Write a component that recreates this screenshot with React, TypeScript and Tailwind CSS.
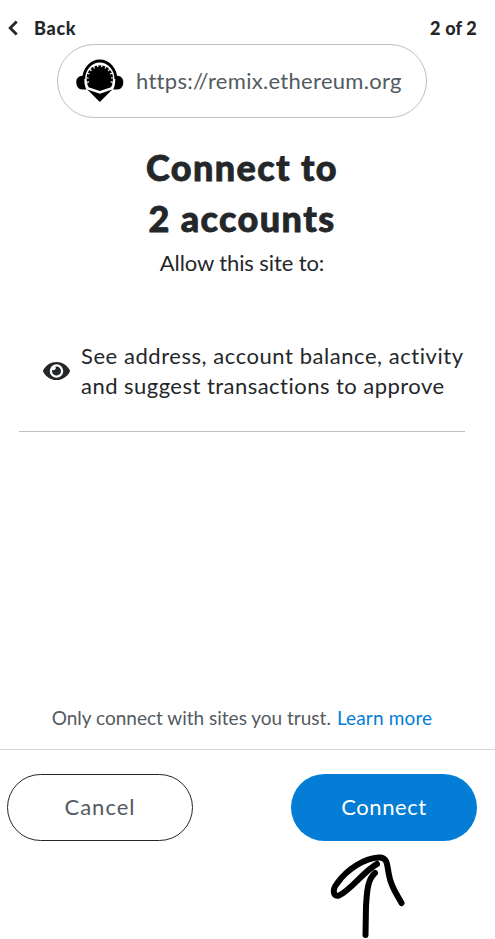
import React from 'react';
import { FaEye } from 'react-icons/fa';

function RemixLogo() {
  return (
    <svg viewBox="0 0 60 60" className="h-[60px] w-[60px]" aria-hidden="true">
      <path d="M13.800 28a16 18 0 0 1 32 0" fill="none" stroke="#000" strokeWidth="2.800" />
      <path d="M14.500 24.700c-5-.2-8.200 1.700-8.200 6.300 0 4.500 2 7.300 6.200 7.600h4c-1.800-3.300-2.600-8-2-13.900zM45.100 24.700c5-.2 8.200 1.700 8.200 6.300 0 4.500-2 7.300-6.200 7.600h-4c1.800-3.300 2.600-8 2-13.900z" fill="#000" />
      <path d="M16.600 27a13.200 12.800 0 0 1 26.400 0c0 3.500-.6 6.500-2 9.300L29.800 40 18.600 36.300c-1.400-2.800-2-5.800-2-9.300z" fill="#000" />
      <path d="M27.500 13.500l.4 2.700M32.100 13.500l-.4 2.700M36.300 15l-1.200 2.400M40 18l-1.900 1.900M42.500 22l-2.500 1M43.600 27h-2.700M43.200 31.500l-2.600-.6M23.300 15l1.200 2.400M19.600 18l1.900 1.900M17.100 22l2.500 1M16 27h2.700M16.400 31.500l2.600-.6" stroke="#fff" strokeWidth="1.200" />
      <path d="M17.300 38.600l12.500 4.200 12.500-4.200-12.500 12.500z" fill="#000" />
    </svg>
  );
}

function HandDrawnArrow() {
  return (
    <svg viewBox="0 0 100 94" className="ml-[320px] mt-1 h-[94px] w-[100px]" fill="none" stroke="#000" strokeWidth="6" strokeLinecap="round" strokeLinejoin="round" aria-hidden="true">
      <path d="M57 19C45 25 30 46 19 50.500C13 52 12 45 17 38.500C27 24 45 13 59 12.500C68 12 67 21 69 30C71 42 76 48 81.500 58" />
      <path d="M55 28C47 35 47 48 46 61L45.500 90" />
    </svg>
  );
}

export default function App() {
  return (
    <main className="flex h-[939px] w-[495px] flex-col overflow-hidden bg-white font-['Lato',sans-serif] text-[#24272a]">
      <header className="flex h-11 shrink-0 items-center justify-between pl-2 pr-[18px] pt-3 text-[18px] font-black leading-8">
        <div className="flex items-center">
          <svg viewBox="0 0 10 16" className="h-4 w-2.5" fill="none" stroke="currentColor" strokeWidth="2.800" aria-hidden="true">
            <path d="M8.700 1.500L2.200 8l6.500 6.500" />
          </svg>
          <span className="ml-4 tracking-[0.7px]">Back</span>
        </div>
        <span className="tracking-[0.2px]">2 of 2</span>
      </header>

      <section className="flex w-[484px] flex-col items-center">
        <div className="flex h-[74px] w-[370px] items-center rounded-full border border-[#bbc0c5] pl-3 text-[22px] text-[#535a61]">
          <RemixLogo />
          <span className="ml-1.5 whitespace-nowrap pb-px tracking-[0.3px]">https://remix.ethereum.org</span>
        </div>
        <h1 className="mt-6 text-center text-[36px] font-black leading-[51px] tracking-[1.4px] [-webkit-text-stroke:0.8px_currentColor]">
          <span className="block">Connect to</span>
          <span className="block">2 accounts</span>
        </h1>
        <p className="mt-[3px] text-[22px] leading-[32px] tracking-[-0.1px]">Allow this site to:</p>
      </section>

      <section className="ml-[19px] mt-[62px] flex h-[91px] w-[446px] border-b border-[#bbc0c5] pl-6">
        <FaEye className="mt-[18px] h-6 w-[27px] shrink-0" />
        <p className="ml-[11px] whitespace-nowrap text-[22px] leading-[30px]">
          <span className="block tracking-[0.55px]">See address, account balance, activity</span>
          <span className="block tracking-[0.47px]">and suggest transactions to approve</span>
        </p>
      </section>

      <p className="mt-auto flex w-[484px] justify-center whitespace-nowrap pb-[17px] text-[19px] leading-7 text-[#535a61]">
        <span>Only connect with sites you trust.</span>
        <a className="ml-1.5 tracking-[0.15px] text-[#037dd6]">Learn more</a>
      </p>
      <footer className="h-[190px] shrink-0 border-t border-[#d6d9dc] pt-6">
        <div className="flex justify-between pl-[7px] pr-[18px] text-[22px]">
          <button className="h-[67px] w-[186px] rounded-full border border-[#24272a] pb-0.5 tracking-[1px] text-[#535a61]">Cancel</button>
          <button className="h-[67px] w-[186px] rounded-full bg-[#037dd6] pb-0.5 tracking-[0.6px] text-white">Connect</button>
        </div>
        <HandDrawnArrow />
      </footer>
    </main>
  );
}
